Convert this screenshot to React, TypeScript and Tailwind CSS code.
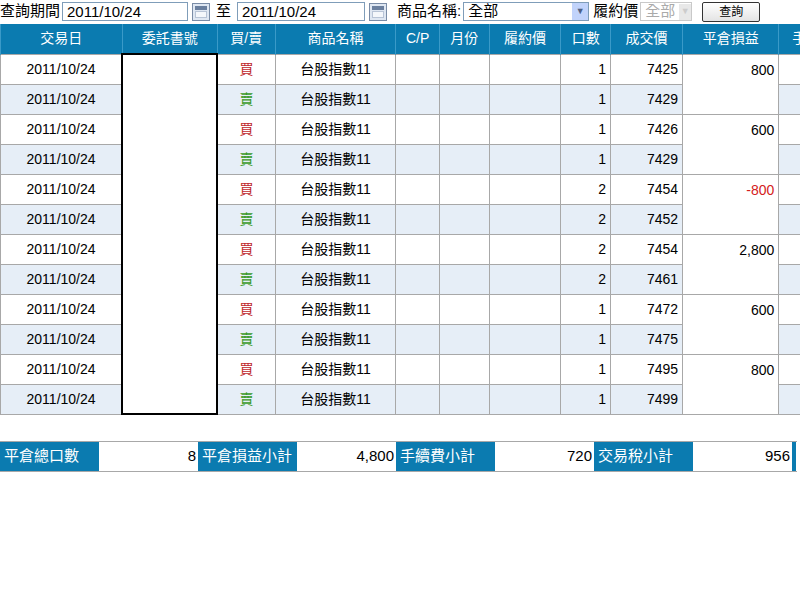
const rows = [
  { side: '買', qty: 1, price: 7425, pl: '800' },
  { side: '賣', qty: 1, price: 7429 },
  { side: '買', qty: 1, price: 7426, pl: '600' },
  { side: '賣', qty: 1, price: 7429 },
  { side: '買', qty: 2, price: 7454, pl: '-800' },
  { side: '賣', qty: 2, price: 7452 },
  { side: '買', qty: 2, price: 7454, pl: '2,800' },
  { side: '賣', qty: 2, price: 7461 },
  { side: '買', qty: 1, price: 7472, pl: '600' },
  { side: '賣', qty: 1, price: 7475 },
  { side: '買', qty: 1, price: 7495, pl: '800' },
  { side: '賣', qty: 1, price: 7499 },
];

const cols = [120, 94, 57, 119, 43, 49, 71, 49, 71, 95, 40];
const heads = ['交易日', '委託書號', '買/賣', '商品名稱', 'C/P', '月份', '履約價', '口數', '成交價', '平倉損益', '手'];

function CalIcon() {
  return (
    <div className="w-[18px] h-[18px] border border-[#7a8ca6] bg-[#dfe7f2] flex flex-col p-[2px]">
      <div className="h-[4px] bg-[#6a7f9e]" />
      <div className="flex-1 mt-[1px] bg-[#f4f7fb] border border-[#b8c4d6]" />
    </div>
  );
}

export default function App() {
  return (
    <div className="w-[800px] h-[600px] bg-white overflow-hidden text-[14px] text-black" style={{ fontFamily: '"Liberation Sans", "Noto Sans CJK TC", sans-serif' }}>
      <div className="h-[23px] flex items-center gap-[2px] whitespace-nowrap text-[15px]">
        <span>查詢期間</span>
        <div className="w-[126px] h-[19px] border border-[#7f9db9] px-1 leading-[17px]">2011/10/24</div>
        <div className="ml-[2px]"><CalIcon /></div>
        <span className="ml-[4px]">至</span>
        <div className="ml-[4px] w-[128px] h-[19px] border border-[#7f9db9] px-1 leading-[17px]">2011/10/24</div>
        <div className="ml-[2px]"><CalIcon /></div>
        <span className="ml-[8px]">商品名稱:</span>
        <div className="w-[126px] h-[19px] border border-[#7f9db9] flex items-center">
          <span className="flex-1 px-1">全部</span>
          <div className="w-[16px] h-[17px] bg-[#c1d3fb] text-[#4d6185] text-[9px] flex items-center justify-center">▼</div>
        </div>
        <span className="ml-[2px]">履約價</span>
        <div className="w-[52px] h-[19px] border border-[#c9c9c9] flex items-center text-[#aaa]">
          <span className="flex-1 px-1">全部</span>
          <div className="w-[15px] h-[16px] bg-[#e8e8e8] text-[#ccc] text-[9px] flex items-center justify-center">▼</div>
        </div>
        <div className="ml-[8px] w-[58px] h-[20px] border border-[#333] rounded-[2px] bg-gradient-to-b from-white to-[#e4e4e4] text-[12px] flex items-center justify-center">查詢</div>
      </div>
      <table className="table-fixed border-collapse mt-[1px]" style={{ width: 820 }}>
        <colgroup>
          {cols.map((w, i) => <col key={i} style={{ width: w }} />)}
        </colgroup>
        <thead>
          <tr className="h-[30px] bg-[#0b7bb0] text-white">
            {heads.map((h, i) => (
              <th key={i} className="font-normal border-x border-[#3a9ac8] text-center whitespace-nowrap overflow-hidden">{h}</th>
            ))}
          </tr>
        </thead>
        <tbody>
          {rows.map((r, i) => {
            const bg = i % 2 ? 'bg-[#e6eef7]' : 'bg-white';
            const cell = 'border border-[#a8a8a8] px-1';
            return (
              <tr key={i} className={`h-[30px] ${bg}`}>
                <td className={`${cell} text-center`}>2011/10/24</td>
                {i === 0 && <td rowSpan={12} className="border-2 border-black bg-white" />}
                <td className={`${cell} text-center ${r.side === '買' ? 'text-[#c0282c]' : 'text-[#3a9a28]'}`}>{r.side}</td>
                <td className={`${cell} text-center`}>台股指數11</td>
                <td className={cell} />
                <td className={cell} />
                <td className={cell} />
                <td className={`${cell} text-right`}>{r.qty}</td>
                <td className={`${cell} text-right`}>{r.price}</td>
                {i % 2 === 0 && (
                  <td rowSpan={2} className={`${cell} bg-white text-right align-top pt-[5px] ${r.pl?.startsWith('-') ? 'text-[#d42020]' : ''}`}>{r.pl}</td>
                )}
                <td className={cell} />
              </tr>
            );
          })}
        </tbody>
      </table>
      <div className="mt-[26px] flex h-[31px] border-y border-[#a8a8a8] w-[797px] text-[15px]">
        {[['平倉總口數', '8'], ['平倉損益小計', '4,800'], ['手續費小計', '720'], ['交易稅小計', '956']].map(([l, v]) => (
          <div key={l} className="flex w-[198px]">
            <div className="w-[99px] bg-[#0b7bb0] text-white px-1 flex items-center whitespace-nowrap">{l}</div>
            <div className="flex-1 flex items-center justify-end px-[2px]">{v}</div>
          </div>
        ))}
        <div className="w-[4px] bg-[#0b7bb0]" />
      </div>
    </div>
  );
}
